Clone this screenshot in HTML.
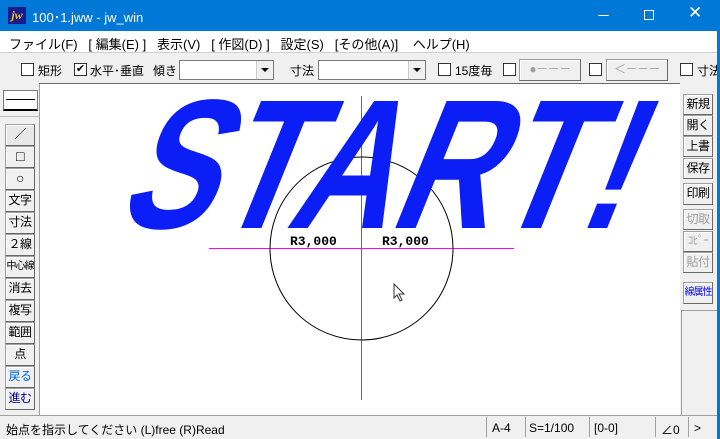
<!DOCTYPE html><html><head><meta charset="utf-8"><style>
*{margin:0;padding:0;box-sizing:border-box}
body{width:720px;height:439px;overflow:hidden;background:#f0f0f0;font-family:"Liberation Sans","Noto Sans CJK JP",sans-serif;font-size:12px;color:#000;position:relative}
.a{position:absolute;white-space:nowrap}
.cb{position:absolute;width:13px;height:13px;border:1px solid #333;background:#fff}
.btn{position:absolute;border:1px solid #a0a0a0;border-right-color:#696969;border-bottom-color:#696969;background:#f0f0f0;text-align:center;font-size:12px;line-height:19px;box-shadow:inset 1px 1px #fff;white-space:nowrap;overflow:hidden;letter-spacing:-0.5px}
.sm{font-size:10px;letter-spacing:-1px}
.combo{position:absolute;border:1px solid #7a7a7a;background:#fff;height:20px}
.combo i{position:absolute;right:0;top:0;width:17px;height:18px;background:#f0f0f0;border-left:1px solid #ccc}
.combo i:after{content:"";position:absolute;left:4px;top:7px;border:4px solid transparent;border-top:4px solid #000}
</style></head><body>
<div class="a" style="left:0;top:0;width:720px;height:31px;background:#0078d7"></div>
<div class="a" style="left:8px;top:7px;width:18px;height:17px;background:#1a1a8c;color:#f0c020;font:italic bold 12px 'Liberation Serif',serif;text-align:center;line-height:17px">jw</div>
<div class="a" style="left:32px;top:7px;color:#fff;font-size:13px">100･1.jww - jw_win</div>
<div class="a" style="left:598px;top:15px;width:11px;height:1px;background:#fff"></div>
<div class="a" style="left:644px;top:10px;width:10px;height:10px;border:1px solid #fff"></div>
<div class="a" style="left:688px;top:3px;color:#fff;font-size:17px">✕</div>
<div class="a" style="left:0;top:31px;width:720px;height:22px;background:#fff"></div>
<div class="a" style="left:9px;top:34px;font-size:13px">ファイル(F)&nbsp;&nbsp;&nbsp;[ 編集(E) ]&nbsp;&nbsp;&nbsp;表示(V)&nbsp;&nbsp;&nbsp;[ 作図(D) ]&nbsp;&nbsp;&nbsp;設定(S)&nbsp;&nbsp;&nbsp;[その他(A)]&nbsp;&nbsp;&nbsp;&nbsp;ヘルプ(H)</div>
<div class="a" style="left:0;top:52px;width:720px;height:1px;background:#d0d0d0"></div>
<div class="cb" style="left:21px;top:63px"></div><div class="a" style="left:38px;top:62px">矩形</div>
<div class="cb" style="left:74px;top:63px;font-size:11px;line-height:11px;text-align:center">✔</div><div class="a" style="left:90px;top:62px">水平･垂直</div>
<div class="a" style="left:153px;top:62px">傾き</div>
<div class="combo" style="left:179px;top:60px;width:95px"><i></i></div>
<div class="a" style="left:290px;top:62px">寸法</div>
<div class="combo" style="left:318px;top:60px;width:108px"><i></i></div>
<div class="cb" style="left:438px;top:63px"></div><div class="a" style="left:455px;top:62px">15度毎</div>
<div class="cb" style="left:503px;top:63px"></div>
<div class="btn" style="left:519px;top:59px;width:62px;height:22px;color:#a0a0a0">●－－－</div>
<div class="cb" style="left:589px;top:63px"></div>
<div class="btn" style="left:606px;top:59px;width:62px;height:22px;color:#a0a0a0">＜－－－</div>
<div class="cb" style="left:680px;top:63px"></div><div class="a" style="left:697px;top:62px">寸法</div>
<div class="a" style="left:39px;top:83px;width:641px;height:332px;background:#fff;border-top:1px solid #696969;border-left:1px solid #a0a0a0"></div>
<div class="a" style="left:3px;top:90px;width:35px;height:21px;background:#fff;border:1px solid #7a7a7a;border-bottom:2px solid #000"><div style="margin:8px 2px 0;height:1px;background:#000"></div></div>
<div class="a" style="left:0;top:116px;width:39px;height:1px;background:#bbb"></div>
<div class="btn" style="left:5px;top:124px;width:30px;height:22px;background:#e8e8e8">／</div>
<div class="btn" style="left:5px;top:146px;width:30px;height:22px;font-size:14px">□</div>
<div class="btn" style="left:5px;top:168px;width:30px;height:22px;font-size:14px">○</div>
<div class="btn" style="left:5px;top:190px;width:30px;height:22px">文字</div>
<div class="btn" style="left:5px;top:212px;width:30px;height:22px">寸法</div>
<div class="btn" style="left:5px;top:234px;width:30px;height:22px">２線</div>
<div class="btn sm" style="left:5px;top:256px;width:30px;height:22px">中心線</div>
<div class="btn" style="left:5px;top:278px;width:30px;height:22px">消去</div>
<div class="btn" style="left:5px;top:300px;width:30px;height:22px">複写</div>
<div class="btn" style="left:5px;top:322px;width:30px;height:22px">範囲</div>
<div class="btn" style="left:5px;top:344px;width:30px;height:22px">点</div>
<div class="btn" style="left:5px;top:366px;width:30px;height:22px;color:#0066cc">戻る</div>
<div class="btn" style="left:5px;top:388px;width:30px;height:22px;color:#000080">進む</div>
<div class="btn" style="left:683px;top:94px;width:30px;height:21px">新規</div>
<div class="btn" style="left:683px;top:115px;width:30px;height:21px">開く</div>
<div class="btn" style="left:683px;top:136px;width:30px;height:21px">上書</div>
<div class="btn" style="left:683px;top:158px;width:30px;height:21px">保存</div>
<div class="btn" style="left:683px;top:183px;width:30px;height:22px">印刷</div>
<div class="btn" style="left:683px;top:209px;width:30px;height:21px;color:#a0a0a0">切取</div>
<div class="btn" style="left:683px;top:231px;width:30px;height:21px;color:#a0a0a0;font-size:11px">ｺﾋﾟｰ</div>
<div class="btn" style="left:683px;top:252px;width:30px;height:21px;color:#a0a0a0">貼付</div>
<div class="btn sm" style="left:683px;top:282px;width:30px;height:22px;color:#0000ff">線属性</div>
<div class="a" style="left:681px;top:310px;width:36px;height:1px;background:#a0a0a0"></div>
<div class="a" style="left:681px;top:310px;width:1px;height:105px;background:#a0a0a0"></div>
<div class="a" style="left:717px;top:31px;width:3px;height:408px;background:#0078d7"></div>
<svg class="a" style="left:0;top:0" width="720" height="439">
<line x1="361.5" y1="96" x2="361.5" y2="400" stroke="#ff00ff"/>
<line x1="209" y1="248.5" x2="514" y2="248.5" stroke="#ff00ff"/>
<circle cx="361.5" cy="248.5" r="91.5" fill="none" stroke="#000"/>
<text transform="translate(114,228) skewX(-22) scale(0.78,1.02)" font-family="Liberation Sans" font-weight="bold" font-size="181" fill="#0b1ef5">START!</text>
<text x="290" y="245" font-family="Liberation Mono" font-weight="bold" font-size="13">R3,000</text>
<text x="382" y="245" font-family="Liberation Mono" font-weight="bold" font-size="13">R3,000</text>
<path d="M394 284 L394 298 L397 295 L400 301 L402 300 L399 294 L404 294 Z" fill="#fff" stroke="#333"/>
</svg>
<div class="a" style="left:0;top:415px;width:717px;height:1px;background:#a0a0a0"></div>
<div class="a" style="left:6px;top:421px;font-size:12px">始点を指示してください (L)free (R)Read</div>
<div class="a" style="left:486px;top:417px;width:41px;height:20px;border-left:1px solid #a0a0a0;padding:4px 5px">A-4</div>
<div class="a" style="left:525px;top:417px;width:64px;height:20px;border-left:1px solid #a0a0a0;padding:4px 3px">S=1/100</div>
<div class="a" style="left:589px;top:417px;width:66px;height:20px;border-left:1px solid #a0a0a0;padding:4px 4px">[0-0]</div>
<div class="a" style="left:655px;top:417px;width:33px;height:20px;border-left:1px solid #a0a0a0;padding:4px 5px">∠0</div>
<div class="a" style="left:688px;top:417px;width:20px;height:20px;border-left:1px solid #a0a0a0;padding:4px 5px">&gt;</div>
</body></html>
